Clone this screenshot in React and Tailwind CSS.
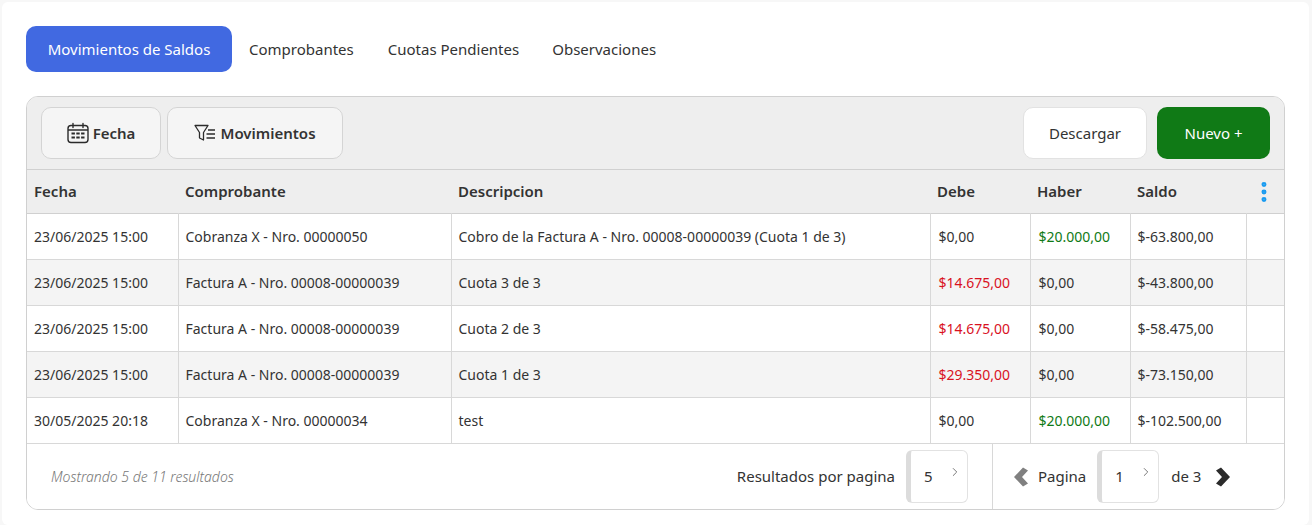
import React from 'react';
import { ChevronRight, MoreVertical } from 'lucide-react';

const rows = [
  { fecha: '23/06/2025 15:00', comp: 'Cobranza X - Nro. 00000050', desc: 'Cobro de la Factura A - Nro. 00008-00000039 (Cuota 1 de 3)', debe: '$0,00', haber: '$20.000,00', saldo: '$-63.800,00' },
  { fecha: '23/06/2025 15:00', comp: 'Factura A - Nro. 00008-00000039', desc: 'Cuota 3 de 3', debe: '$14.675,00', haber: '$0,00', saldo: '$-43.800,00' },
  { fecha: '23/06/2025 15:00', comp: 'Factura A - Nro. 00008-00000039', desc: 'Cuota 2 de 3', debe: '$14.675,00', haber: '$0,00', saldo: '$-58.475,00' },
  { fecha: '23/06/2025 15:00', comp: 'Factura A - Nro. 00008-00000039', desc: 'Cuota 1 de 3', debe: '$29.350,00', haber: '$0,00', saldo: '$-73.150,00' },
  { fecha: '30/05/2025 20:18', comp: 'Cobranza X - Nro. 00000034', desc: 'test', debe: '$0,00', haber: '$20.000,00', saldo: '$-102.500,00' },
];

const CalendarIcon = () => (
  <svg width="22" height="22" viewBox="0 0 22 22" fill="none" stroke="#2b2b2b" strokeWidth="1.4">
    <rect x="1" y="3.5" width="20" height="17" rx="3" />
    <path d="M1 8h20" />
    <path d="M6 1.5v4M16 1.5v4" strokeLinecap="round" />
    <path d="M4.5 11.5h3.4M9.3 11.5h3.4M14.1 11.5h3.4M4.5 15.5h3.4M9.3 15.5h3.4M14.1 15.5h3.4" strokeWidth="2.2" />
  </svg>
);

const FilterIcon = () => (
  <svg width="22" height="18" viewBox="0 0 22 18" fill="none" stroke="#2b2b2b" strokeWidth="1.3">
    <path d="M1 1.5h13L9.5 8.5V16l-4-2V8.5z" strokeLinejoin="round" />
    <path d="M14 6h7M12.5 10h8.5M12.5 14h8.5" />
  </svg>
);

const PageChevron = ({ dir, color }) => (
  <svg width="16" height="20" viewBox="0 0 16 20" fill={color}>
    {dir === 'left'
      ? <path d="M10 0.5l5 3-6 6.5 6 6.5-5 3L1 10z" />
      : <path d="M6 0.5l-5 3 6 6.5-6 6.5 5 3L15 10z" />}
  </svg>
);

const SelectBox = ({ value }) => (
  <div className="flex h-[53px] w-[62px] rounded-md border border-[#e2e2e2] border-l-[5px] border-l-[#dcdcdc] bg-white pl-[13px] text-[#333]">
    <span className="self-center">{value}</span>
    <ChevronRight size={14} strokeWidth={1.5} className="ml-[15px] mt-[14px] text-[#666]" />
  </div>
);

export default function App() {
  return (
    <div className="h-[525px] w-[1312px] overflow-hidden bg-[#f7f7f7] pt-[2px] pl-[2px] font-['Noto_Sans',sans-serif] text-[15px] text-[#333]">
      <div className="h-[523px] w-[1307px] rounded-md bg-white pt-6 pl-6">
        <div className="flex h-[46px] items-center">
          <div className="flex h-full w-[206px] items-center justify-center rounded-[10px] bg-[#4169e1] text-white">Movimientos de Saldos</div>
          <div className="ml-[17px]">Comprobantes</div>
          <div className="ml-[34px]">Cuotas Pendientes</div>
          <div className="ml-[33px]">Observaciones</div>
        </div>

        <div className="mt-6 h-[414px] w-[1259px] overflow-hidden rounded-xl border border-[#d0d0d0]">
          <div className="flex h-[72px] items-center bg-[#eeeeee] px-[14px]">
            <button className="flex h-[52px] w-[120px] items-center justify-center gap-1 rounded-[10px] border border-[#d4d4d4] bg-[#f5f5f5] font-semibold">
              <CalendarIcon />
              Fecha
            </button>
            <button className="ml-[6px] flex h-[52px] w-[176px] items-center justify-center gap-1 rounded-[10px] border border-[#d4d4d4] bg-[#f5f5f5] font-semibold">
              <FilterIcon />
              Movimientos
            </button>
            <button className="ml-auto h-[52px] w-[124px] rounded-[10px] border border-[#e2e2e2] bg-white">Descargar</button>
            <button className="ml-[10px] h-[52px] w-[113px] rounded-[10px] bg-[#107a16] text-white">Nuevo +</button>
          </div>

          <table className="w-full table-fixed border-collapse">
            <colgroup>
              <col className="w-[151px]" />
              <col className="w-[273px]" />
              <col className="w-[479px]" />
              <col className="w-[100px]" />
              <col className="w-[100px]" />
              <col className="w-[116px]" />
              <col />
            </colgroup>
            <thead>
              <tr className="h-[44px] border-y border-[#d0d0d0] bg-[#eeeeee] text-left font-semibold">
                <th className="px-[7px] font-semibold">Fecha</th>
                <th className="px-[7px] font-semibold">Comprobante</th>
                <th className="px-[7px] font-semibold">Descripcion</th>
                <th className="px-[7px] font-semibold">Debe</th>
                <th className="px-[7px] font-semibold">Haber</th>
                <th className="px-[7px] font-semibold">Saldo</th>
                <th className="pl-[5px]">
                  <MoreVertical size={26} strokeWidth={2.6} className="text-[#1a9bf0]" />
                </th>
              </tr>
            </thead>
            <tbody className="text-sm">
              {rows.map((r, i) => (
                <tr key={i} className={`h-[46px] border-b border-[#d8d8d8] ${i % 2 === 1 ? 'bg-[#f4f4f4]' : 'bg-white'}`}>
                  <td className="px-[7px]">{r.fecha}</td>
                  <td className="border-l border-[#d8d8d8] px-[7px]">{r.comp}</td>
                  <td className="border-l border-[#d8d8d8] px-[7px]">{r.desc}</td>
                  <td className={`border-l border-[#d8d8d8] px-[8px] ${r.debe !== '$0,00' ? 'text-[#d9121f]' : ''}`}>{r.debe}</td>
                  <td className={`border-l border-[#d8d8d8] px-[8px] ${r.haber !== '$0,00' ? 'text-[#107a16]' : ''}`}>{r.haber}</td>
                  <td className="border-l border-[#d8d8d8] px-[7px]">{r.saldo}</td>
                  <td className="border-l border-[#d8d8d8]"></td>
                </tr>
              ))}
            </tbody>
          </table>

          <div className="flex h-[65px] items-center bg-white">
            <span className="ml-6 text-sm font-light italic text-[#777]">Mostrando 5 de 11 resultados</span>
            <div className="ml-auto flex items-center gap-[11px]">
              <span>Resultados por pagina</span>
              <SelectBox value="5" />
            </div>
            <div className="ml-6 flex h-full w-[292px] items-center border-l border-[#d8d8d8] pl-5">
              <PageChevron dir="left" color="#808080" />
              <span className="ml-[9px]">Pagina</span>
              <div className="ml-[11px]"><SelectBox value="1" /></div>
              <span className="ml-[12px]">de 3</span>
              <div className="ml-[14px]"><PageChevron dir="right" color="#2b2b2b" /></div>
            </div>
          </div>
        </div>
      </div>
    </div>
  );
}
